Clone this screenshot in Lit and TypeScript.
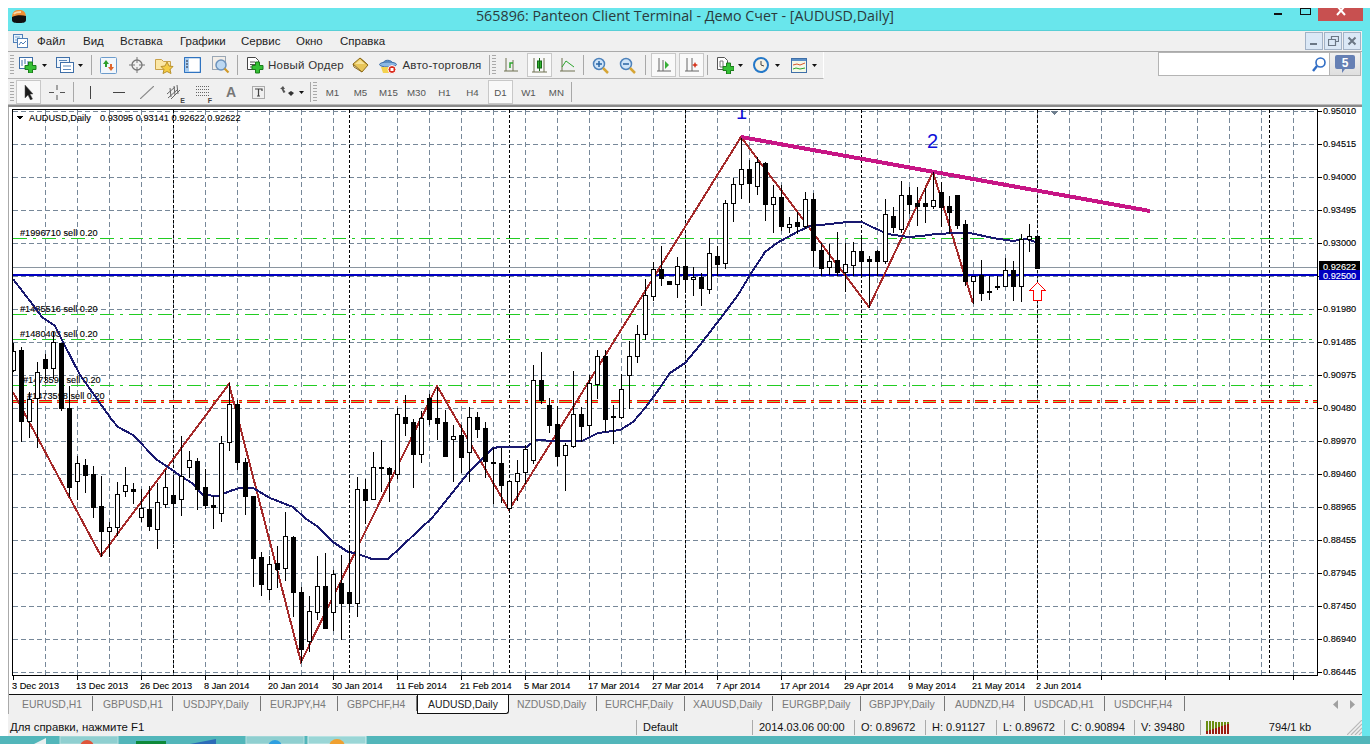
import { LitElement, html, css, svg, TemplateResult } from "lit";
import { customElement } from "lit/decorators.js";

// candle data in pixel rows: [high, bodyTop, bodyBottom, low, isWhite]
const C: [number, number, number, number, number][] = [
[343,351,370,371,1],[347,350,421,441,0],[392,399,421,437,1],[362,372,398,447,1],[354,359,368,380,0],[332,342,368,378,1],[345,343,408,410,0],[386,408,487,496,0],
[456,463,481,499,1],[459,465,475,492,0],[466,474,507,517,0],[476,506,531,556,0],[522,527,531,556,1],[482,494,527,535,1],[467,485,491,496,1],[483,489,491,503,0],
[489,508,517,521,1],[486,509,526,530,0],[483,502,529,548,1],[470,487,504,507,1],[475,495,503,543,0],[436,476,499,515,1],[451,460,467,477,1],[458,461,489,509,0],
[469,487,505,508,0],[496,505,507,528,0],[436,443,513,521,1],[383,404,442,450,1],[400,404,462,469,0],[458,462,496,514,0],[496,496,558,586,0],[552,557,584,595,0],
[556,564,589,599,1],[546,563,569,587,0],[512,536,568,580,1],[536,537,592,616,0],[587,592,649,662,0],[596,611,641,651,1],[556,586,612,619,1],[553,586,628,628,0],
[570,574,612,630,1],[555,583,603,639,0],[547,592,603,611,0],[477,489,603,616,1],[479,489,500,523,0],[452,467,499,492,1],[440,467,468,491,0],[467,468,474,501,0],
[408,414,474,478,1],[395,417,423,435,0],[419,422,454,487,0],[411,418,454,462,1],[394,398,419,424,0],[387,418,423,439,0],[410,422,456,456,0],[425,436,439,481,1],
[425,435,457,472,0],[407,417,452,481,1],[412,417,429,437,0],[422,428,461,477,0],[448,462,463,503,0],[448,463,485,502,0],[480,481,508,511,1],[460,473,481,500,1],
[445,449,472,483,1],[365,380,460,463,1],[352,380,400,403,0],[398,405,425,432,0],[406,424,456,465,0],[443,445,455,490,1],[371,414,446,447,1],[407,414,426,441,0],
[375,383,425,435,1],[350,356,384,398,1],[350,356,419,431,0],[405,416,417,443,0],[374,389,417,418,1],[341,356,375,408,1],[325,334,356,362,1],[279,295,334,339,1],
[262,269,296,300,1],[246,269,278,285,0],[281,281,284,284,0],[257,266,284,297,1],[242,266,279,292,0],[267,277,279,295,1],[273,277,288,305,0],[238,253,289,293,1],
[246,256,264,275,0],[200,203,263,268,1],[178,184,203,221,1],[138,169,184,198,1],[160,169,183,202,0],[157,162,186,194,1],[162,163,204,220,0],[185,197,204,232,1],
[185,197,226,230,0],[217,224,227,232,1],[212,222,226,233,0],[192,199,226,228,1],[193,199,250,266,0],[243,250,268,275,0],[244,261,267,274,1],[232,260,272,275,0],
[243,264,272,291,1],[242,251,265,275,1],[236,251,261,275,0],[256,259,261,307,0],[250,251,261,275,0],[199,214,261,263,1],[207,216,227,232,0],[181,195,229,232,1],
[187,195,204,213,0],[187,203,206,225,0],[188,203,206,222,0],[172,200,206,208,1],[182,192,207,226,0],[196,206,212,233,0],[195,195,225,228,0],[220,224,281,285,0],
[276,276,281,303,1],[260,275,293,300,0],[276,291,292,299,0],[276,286,287,289,0],[258,270,286,286,1],[261,270,286,300,0],[234,239,286,301,1],[224,236,239,251,1],[236,236,268,268,0],
];
const PRICES = ["0.95010","0.94515","0.94000","0.93495","0.93000","","0.91980","0.91485","0.90975","0.90480","0.89970","0.89460","0.88965","0.88455","0.87945","0.87450","0.86940","0.86445"];
const HY = [111,144,177,210,243,276,309,342,375,408,441,474,507,540,573,606,639,672];
const DATES = ["3 Dec 2013","13 Dec 2013","26 Dec 2013","8 Jan 2014","20 Jan 2014","30 Jan 2014","11 Feb 2014","21 Feb 2014","5 Mar 2014","17 Mar 2014","27 Mar 2014","7 Apr 2014","17 Apr 2014","29 Apr 2014","9 May 2014","21 May 2014","2 Jun 2014"];
const SEP = [173,349,509,685,861,1037,1269];
const ZIG = "13,392 101,556 229,384 301,662 437,386 509,510 741,137 869,307 933,172 973,303";
const MA = "13,279 33,305 42,317 55,326 63,342 80,375 112,420 118,427 133,435 157,460 168,467 182,477 192,483 203,495 218,496 230,491 240,488 253,488 270,498 293,507 305,518 318,527 333,542 348,552 355,553 372,559 388,559 400,548 420,529 432,518 457,487 468,473 493,448 500,447 527,447 535,440 557,441 582,441 598,433 620,430 633,422 645,408 657,392 670,373 685,363 700,345 720,319 738,295 750,275 765,252 777,243 797,232 810,226 830,224 847,222 862,222 872,227 888,234 908,237 922,236 935,234 958,233 970,233 993,238 1013,241 1027,239 1035,242";
const ORDERS: [number, number, string][] = [[20,236,"#1996710 sell 0.20"],[20,312,"#1485516 sell 0.20"],[20,337,"#1480403 sell 0.20"],[23,383,"#1473598 sell 0.20"],[27,399,"#1473598 sell 0.20"]];
const TABS: [string, number, number][] = [["EURUSD,H1",22,84],["GBPUSD,H1",103,80],["USDJPY,Daily",183,88],["EURJPY,H4",270,77],["GBPCHF,H4",347,79],["AUDUSD,Daily",428,92],["NZDUSD,Daily",517,88],["EURCHF,Daily",605,88],["XAUUSD,Daily",693,88],["EURGBP,Daily",782,88],["GBPJPY,Daily",869,84],["AUDNZD,H4",955,80],["USDCAD,H1",1034,80],["USDCHF,H4",1114,80]];
const STATUS: [string, number][] = [["Default",116],["2014.03.06 00:00",102],["O: 0.89672",71],["H: 0.91127",71],["L: 0.89672",68],["C: 0.90894",70],["V: 39480",66]];

const ic = (w: number, h: number, body: TemplateResult) => html`<svg width=${w} height=${h} viewBox="0 0 ${w} ${h}">${body}</svg>`;
const plus = (x: number, y: number) => svg`<path d="M${x+3.5} ${y}h4v3.5h3.5v4h-3.5v3.5h-4v-3.5h-3.5v-4h3.5z" fill="#35c035" stroke="#1b7d1b" stroke-width="1"/>`;
const drop = html`<svg width="5" height="3" viewBox="0 0 5 3"><path d="M0 0h5L2.5 3z" fill="#111"/></svg>`;

const I: Record<string, TemplateResult> = {
  app: ic(16,15,svg`<path d="M1 9C1 2 4 1 8 1s7 1 7 8z" fill="#ef8f35"/><path d="M3 5c1-2 4-2 7-2" stroke="#f8d9a8" stroke-width="2" fill="none"/><path d="M1 8c4-2 10-2 14-1v4c0 3-4 3-7 3s-7 0-7-3z" fill="#111"/>`),
  menu: ic(15,14,svg`<rect x=".5" y=".5" width="9" height="8" fill="#eaf3fb" stroke="#4f7fb8"/><rect x="4.5" y="4.5" width="10" height="9" fill="#fff" stroke="#4f7fb8"/><path d="M6 11l2-3 2 2 3-3" stroke="#4f7fb8" fill="none"/><path d="M2 3h5M2 6h2" stroke="#7aa5d2"/>`),
  chart: ic(18,16,svg`<rect x=".5" y=".5" width="13" height="11" fill="#fff" stroke="#3f6fa8"/><path d="M3 3v6M6 2v5M9 4v5" stroke="#3f6fa8"/>${plus(6,5)}`),
  profile: ic(18,16,svg`<rect x=".5" y=".5" width="13" height="10" fill="#eef5fc" stroke="#3f6fa8"/><rect x="4.5" y="5.5" width="13" height="10" fill="#fff" stroke="#3f6fa8"/><path d="M3 3.5h8M7 9h8M7 12.500h8" stroke="#5b88bb"/>`),
  market: ic(17,17,svg`<rect x=".5" y=".5" width="16" height="16" rx="1" fill="#f2f7fc" stroke="#6d9ccc"/><path d="M6 3l3 4H7v3H5V7H3z" fill="#2ca02c"/><path d="M11 14l-3-4h2V7h2v3h2z" fill="#e0652a"/>`),
  cross: ic(16,16,svg`<circle cx="8" cy="8" r="5" fill="none" stroke="#777" stroke-width="1.3"/><path d="M8 0v6M8 10v6M0 8h6M10 8h6" stroke="#777"/>`),
  star: ic(19,18,svg`<path d="M.5 3.500h6l2 2h7v8H.5z" fill="#fbe7a6" stroke="#c9a24a"/><path d="M12 6l2 4 4 .5-3 3 1 4-4-2-4 2 1-4-3-3 4-.5z" fill="#f4cc44" stroke="#b8912c"/>`),
  nav: ic(17,16,svg`<rect x=".5" y=".5" width="16" height="15" rx="1" fill="#fff" stroke="#2f73c0" stroke-width="1.500"/><rect x="1" y="1" width="4" height="14" fill="#a9cdf0"/><path d="M2 4h2M2 7h2M2 10h2" stroke="#223"/>`),
  tester: ic(18,18,svg`<rect x=".5" y=".5" width="13" height="13" fill="#f3eee8" stroke="#9aa7b5"/><circle cx="9" cy="9" r="5" fill="#bcd8f2" stroke="#6d93bc" stroke-width="1.500"/><path d="M12.500 12.500l4 4" stroke="#d09a2a" stroke-width="2.200"/>`),
  order: ic(17,17,svg`<path d="M.5.5h8l3 3v9H.5z" fill="#fff" stroke="#444"/><path d="M3 5h5M3 7.500h5M3 10h3" stroke="#555"/>${plus(5,5)}`),
  book: ic(17,16,svg`<path d="M1 7l7-6 8 7-6 7z" fill="#e8c65a" stroke="#8d6b1a"/><path d="M1 7l1 3 8 5M8 1l8 7" stroke="#8d6b1a" fill="none"/><path d="M3 7l5-4 5 4" fill="#f6e39a"/>`),
  hat: ic(18,17,svg`<path d="M4 7C4 2 13 2 14 7z" fill="#6fa3d8" stroke="#3f6fa8"/><ellipse cx="9" cy="7.500" rx="8.500" ry="2.500" fill="#8cb8e4" stroke="#3f6fa8"/><path d="M2 10h12v6H4z" fill="#f3d24f"/><circle cx="13" cy="12.500" r="4" fill="#d92b1c" stroke="#fff"/><rect x="11.500" y="11" width="3" height="3" fill="#fff"/>`),
  bars: ic(14,14,svg`<path d="M2 0v13M0 13h14M9 2v11" stroke="#6f7150" fill="none"/><path d="M6 10V5h3" stroke="#2da52d" stroke-width="1.500" fill="none"/>`),
  candle: ic(15,15,svg`<path d="M2 0v14M0 14h15M12 0v14" stroke="#6f7150" fill="none"/><rect x="5.500" y="3" width="4" height="7" fill="#2fb52f" stroke="#146814"/><path d="M7.500 0v13" stroke="#146814"/>`),
  line: ic(15,14,svg`<path d="M2 0v13M0 13h15" stroke="#6f7150" fill="none"/><path d="M2 9l4-6 4 3 4 3" stroke="#2da52d" fill="none"/>`),
  zin: ic(17,17,svg`<circle cx="7" cy="7" r="5.500" fill="#cfe4f8" stroke="#4d82bb" stroke-width="1.500"/><path d="M4 7h6M7 4v6" stroke="#2a65a5" stroke-width="1.500"/><path d="M11 11l5 5" stroke="#d6a535" stroke-width="2.500"/>`),
  zout: ic(17,17,svg`<circle cx="7" cy="7" r="5.500" fill="#cfe4f8" stroke="#4d82bb" stroke-width="1.500"/><path d="M4 7h6" stroke="#2a65a5" stroke-width="1.500"/><path d="M11 11l5 5" stroke="#d6a535" stroke-width="2.500"/>`),
  scroll: ic(14,14,svg`<path d="M2 0v13M0 13h14M6 2v11" stroke="#666" fill="none"/><path d="M8 3l4 4-4 4z" fill="#38b038"/>`),
  shift: ic(14,14,svg`<path d="M2 0v13M0 13h14M7 0v13" stroke="#666" fill="none"/><path d="M10 4l1 2 2 1-2 1-1 2-1-2-2-1 2-1z" fill="#d6361e"/>`),
  indic: ic(17,17,svg`<path d="M.5.5h7l3 3v9H.5z" fill="#fff" stroke="#555"/><path d="M3 4h3v6H3z" fill="none" stroke="#777"/>${plus(6,6)}`),
  clock: ic(16,16,svg`<circle cx="8" cy="8" r="7" fill="#f7f1e2" stroke="#2478c8" stroke-width="2"/><path d="M8 4v4l3 1" stroke="#444" fill="none"/>`),
  tpl: ic(16,15,svg`<rect x=".5" y=".5" width="15" height="14" fill="#f4f8e8" stroke="#3f6fa8"/><rect x="1" y="1" width="14" height="2" fill="#5b8fc8"/><path d="M2 7l4-1 3 1 5-2" stroke="#d8562b" fill="none"/><path d="M2 11l3-1 4 1 5-1" stroke="#2da52d" fill="none"/>`),
  cursor: ic(10,15,svg`<path d="M1 0l8 9H6l2.500 5-2 1L4 10l-3 3z" fill="#1b1b1b" stroke="#555" stroke-width=".5"/>`),
  thin: ic(16,15,svg`<path d="M8 0v5M8 10v5M0 7.500h5M11 7.500h5" stroke="#555"/>`),
  vline: ic(3,13,svg`<path d="M1.500 0v13" stroke="#444"/>`),
  hline: ic(12,3,svg`<path d="M0 1.500h12" stroke="#444"/>`),
  trend: ic(14,13,svg`<path d="M0 13L14 0" stroke="#888" stroke-width="1.200"/>`),
  channel: ic(16,17,svg`<path d="M0 10L8 3M1 14l9-8M4 15l9-9M3 4l1 9M7 2l1 9M10 1l1 9" stroke="#666" fill="none"/>`),
  fibo: ic(14,12,svg`<path d="M0 .5h14M0 3.500h14M0 6.500h14M0 9.500h14" stroke="#666" stroke-dasharray="1 1"/>`),
  tbox: ic(13,13,svg`<rect x=".5" y=".5" width="12" height="12" fill="none" stroke="#666" stroke-dasharray="1 1"/><path d="M3 3h7v2M6.500 3v7M5 10h3" stroke="#444" stroke-width="1.200" fill="none"/>`),
  arrows: ic(15,13,svg`<path d="M0 3l3-3 2 3H3.500l2 3-2 1-2-4z" fill="#555"/><path d="M8 7l3 3 3-3-3-2z" fill="#333"/>`),
  glass: ic(14,15,svg`<circle cx="8.500" cy="5.500" r="4.500" fill="#fff" stroke="#2f6cc4" stroke-width="1.600"/><path d="M5 9l-4 5" stroke="#2f6cc4" stroke-width="2.400"/>`),
  bubble: ic(20,19,svg`<path d="M2 0h16a2 2 0 0 1 2 2v10a2 2 0 0 1-2 2H10l-3 4v-4H2a2 2 0 0 1-2-2V2a2 2 0 0 1 2-2z" fill="#6680b4"/>`),
};

type Tool = { x: number; w: number; icon?: string; text?: string; on?: boolean; kind?: string };
const ROW1: Tool[] = [
  {x:10,w:4,kind:"grip"},{x:19,w:18,icon:"chart"},{x:42,w:5,kind:"drop"},{x:56,w:18,icon:"profile"},{x:78,w:5,kind:"drop"},{x:91,w:1,kind:"sep"},
  {x:100,w:17,icon:"market"},{x:129,w:16,icon:"cross"},{x:155,w:19,icon:"star"},{x:184,w:17,icon:"nav"},{x:212,w:18,icon:"tester"},{x:237,w:1,kind:"sep"},
  {x:247,w:17,icon:"order"},{x:268,w:76,text:"Новый Ордер"},{x:352,w:17,icon:"book"},{x:379,w:18,icon:"hat"},{x:402,w:80,text:"Авто-торговля"},
  {x:489,w:1,kind:"sep"},{x:492,w:4,kind:"grip"},{x:504,w:14,icon:"bars"},{x:527,w:25,icon:"candle",on:true},{x:560,w:15,icon:"line"},{x:583,w:1,kind:"sep"},
  {x:592,w:17,icon:"zin"},{x:619,w:17,icon:"zout"},{x:645,w:1,kind:"sep"},{x:651,w:25,icon:"scroll",on:true},{x:679,w:25,icon:"shift",on:true},{x:707,w:1,kind:"sep"},
  {x:717,w:17,icon:"indic"},{x:738,w:5,kind:"drop"},{x:753,w:16,icon:"clock"},{x:775,w:5,kind:"drop"},{x:791,w:16,icon:"tpl"},{x:812,w:5,kind:"drop"},
];
const ROW2: Tool[] = [
  {x:10,w:4,kind:"grip"},{x:16,w:25,icon:"cursor",on:true},{x:49,w:16,icon:"thin"},{x:73,w:1,kind:"sep"},{x:89,w:3,icon:"vline"},{x:113,w:12,icon:"hline"},
  {x:140,w:14,icon:"trend"},{x:167,w:16,icon:"channel",kind:"E"},{x:196,w:14,icon:"fibo",kind:"F"},{x:226,w:10,text:"A",kind:"gl"},{x:252,w:13,icon:"tbox"},
  {x:280,w:15,icon:"arrows"},{x:299,w:5,kind:"drop"},{x:310,w:1,kind:"sep"},{x:313,w:4,kind:"grip"},
  {x:320,w:25,text:"M1",kind:"tf"},{x:348,w:25,text:"M5",kind:"tf"},{x:376,w:25,text:"M15",kind:"tf"},{x:404,w:25,text:"M30",kind:"tf"},{x:432,w:25,text:"H1",kind:"tf"},{x:460,w:25,text:"H4",kind:"tf"},
  {x:488,w:25,text:"D1",kind:"tf",on:true},{x:516,w:25,text:"W1",kind:"tf"},{x:544,w:25,text:"MN",kind:"tf"},{x:571,w:1,kind:"sep"},
];

@customElement("app-root")
export class AppRoot extends LitElement {
  static styles = css`
    :host { display: block; width: 1370px; height: 744px; background: #fff; overflow: hidden; font-family: "Liberation Sans", Arial, sans-serif; color: #222; }
    .page { height: 744px; display: flex; flex-direction: column; }
    .win { flex: 1; min-height: 0; margin: 8px 0 0 8px; border-right: 8px solid #69e6ec; display: flex; flex-direction: column; background: #f0f0f0; }
    .title { height: 22px; flex: none; background: #69e6ec; border-bottom: 1px solid #58cfd6; display: grid; grid-template-columns: 1fr auto 1fr; align-items: start; }
    .title .t { font: 14.3px "Open Sans", "Liberation Sans", sans-serif; color: #2b3a3c; white-space: nowrap; line-height: 16px; }
    .appicon { display: flex; padding: 1px 0 0 3px; height: 21px; }
    .caps { justify-self: end; display: flex; align-items: flex-start; height: 12px; margin-right: -1px; }
    .min { width: 8px; height: 2px; background: #111; margin: 5px 18px 0 0; }
    .max { width: 9px; height: 5px; border: 1px solid #111; margin: 0 7px 0 0; }
    .close { width: 45px; height: 13px; background: #c85050; color: #fff; display: flex; justify-content: center; overflow: hidden; }
    .close svg { margin-top: -2px; }
    .menu { height: 20px; flex: none; border-bottom: 1px solid #aaa; display: flex; align-items: center; font-size: 11.5px; color: #222; }
    .menu .mi { flex: none; white-space: nowrap; width: 0; }
    .menu .micon { display: flex; flex: none; margin-left: 5px; }
    .mdi { margin-left: auto; display: flex; gap: 1px; margin-right: 1px; }
    .mdi div { width: 16px; height: 16px; border: 1px solid #a2b2c6; background: #dbe8f6; display: flex; align-items: center; justify-content: center; }
    .row { display: flex; align-items: center; flex: none; }
    .row1 { height: 27px; }
    .row1 .tools { height: 26px; display: flex; align-items: center; border-bottom: 1px solid #b4b4b4; width: 815px; flex: none; border-right: 1px solid #fff; }
    .row2 { height: 26px; border-bottom: 2px solid #8a8a8a; box-shadow: inset 0 -1px 0 #bbb; }
    .t-item { flex: none; display: flex; align-items: center; justify-content: center; position: relative; height: 24px; white-space: nowrap; }
    .t-item.on { background: #f9f9f9; outline: 1px solid #c8c8c8; outline-offset: -1px; }
    .t-text { font-size: 11.5px; letter-spacing: .25px; color: #333; }
    .tf { font-size: 9.7px; color: #555; letter-spacing: .1px; }
    .gl { font: bold 14px "Liberation Sans", sans-serif; color: #777; }
    .sep { width: 1px; height: 20px; background: #a8a8a8; }
    .grip { width: 4px; height: 20px; background: repeating-linear-gradient(#a9a9a9 0 1px, transparent 1px 3px); }
    .tag { position: absolute; font: bold 7px "Liberation Sans", sans-serif; color: #444; right: -2px; bottom: 0; }
    .search { margin-left: auto; display: flex; margin-right: 1px; height: 24px; flex: none; margin-top: -3px; }
    .sbox { width: 172px; border: 1px solid #b4b4b4; background: #fff; display: flex; align-items: center; justify-content: flex-end; padding-right: 3px; box-sizing: border-box; }
    .sbtn { width: 31px; border: 1px solid #b4b4b4; border-left: none; background: linear-gradient(#f1f1f1, #dfdfdf); display: flex; align-items: center; justify-content: center; position: relative; box-sizing: border-box; }
    .sbtn span { position: absolute; top: 3px; left: 0; right: 0; text-align: center; color: #fff; font: bold 12px "Liberation Sans", sans-serif; }
    .chartbox { flex: none; height: 588px; background: #fff; border-bottom: 1px solid #111; border-left: 1px solid #aaa; box-sizing: border-box; }
    .chartbox svg { display: block; }
    .ct { font: 9.2px "Liberation Sans", sans-serif; fill: #000; stroke: #000; stroke-width: .12px; shape-rendering: auto; }
    .ctw { fill: #fff; stroke: #fff; }
    .tabs { height: 20px; flex: none; display: flex; align-items: stretch; font-size: 10.4px; color: #7a7a7a; border-left: 1px solid #aaa; margin-top: -1px; }
    .tab { flex: none; box-sizing: border-box; border-right: 1px solid #777; margin: 2px 0 3px; display: flex; align-items: center; white-space: nowrap; padding-top: 1px; }
    .tab.active { background: #fff; color: #222; border: 1px solid #111; border-top: none; margin: 1px 0 0; height: 19px; border-radius: 0 0 3px 0; }
    .scrollers { margin-left: auto; display: flex; gap: 12px; align-items: center; margin-right: 7px; }
    .status { height: 21px; flex: none; display: flex; align-items: center; font-size: 11px; color: #111; padding-top: 5px; box-sizing: border-box; }
    .st { flex: none; box-sizing: border-box; height: 15px; border-left: 1px solid #aaa; padding-left: 6px; display: flex; align-items: center; white-space: nowrap; }
    .help { flex: none; width: 628px; padding-left: 2px; box-sizing: border-box; white-space: nowrap; font-size: 11.4px; }
    .conn { width: 66px; height: 15px; }
    .kb { flex: 1; white-space: nowrap; text-align: right; margin-right: 36px; }
    .grip2 { flex: none; display: flex; align-self: flex-end; }
    .taskbar { height: 8px; flex: none; background: #52b6ba; }
    .taskbar svg { display: block; }
  `;

  private tools(list: Tool[]) {
    let pos = 8;
    return list.map((t) => {
      const ml = t.x - pos;
      pos = t.x + t.w;
      const s = `margin-left:${ml}px;width:${t.w}px`;
      if (t.kind === "sep") return html`<div class="sep" style=${s}></div>`;
      if (t.kind === "grip") return html`<div class="grip" style=${s}></div>`;
      if (t.kind === "drop") return html`<div class="t-item" style=${s}>${drop}</div>`;
      return html`<div class="t-item ${t.on ? "on" : ""}" style=${s}>
        ${t.icon ? I[t.icon] : ""}
        ${t.text ? html`<span class=${t.kind === "tf" ? "tf" : t.kind === "gl" ? "gl" : "t-text"}>${t.text}</span>` : ""}
        ${t.kind === "E" || t.kind === "F" ? html`<span class="tag">${t.kind}</span>` : ""}
      </div>`;
    });
  }

  private chart() {
    const vx: number[] = [];
    for (let x = 45; x <= 1293; x += 32) vx.push(x);
    const ticks: number[] = [];
    for (let x = 13; x <= 1317; x += 64) ticks.push(x);
    return html`<svg width="1353" height="587" viewBox="9 107 1353 587" shape-rendering="crispEdges">
      <defs><clipPath id="plot"><rect x="13" y="110" width="1304" height="565"></rect></clipPath></defs>
      <g clip-path="url(#plot)">
        ${HY.map((y) => svg`<line x1="13" x2="1317" y1=${y + 0.5} y2=${y + 0.5} stroke="#778899" stroke-dasharray="5 3"/>`)}
        ${vx.map((x) => svg`<line x1=${x + 0.5} x2=${x + 0.5} y1="110" y2="675" stroke="#778899" stroke-dasharray="5 3"/>`)}
        ${SEP.map((x) => svg`<line x1=${x + 0.5} x2=${x + 0.5} y1="110" y2="675" stroke="#000" stroke-dasharray="3 2"/>`)}
        ${[238.5, 314.5, 339.5, 385.5].map((y) => svg`<line x1="13" x2="1317" y1=${y} y2=${y} stroke="#22cc22" stroke-dasharray="14 6 3 6"/>`)}
        <line x1="13" x2="1317" y1="401.500" y2="401.500" stroke="#ff0000" stroke-width="3" stroke-dasharray="13 5 3 5"/>
        <line x1="13" x2="1317" y1="401.500" y2="401.500" stroke="#9ad24a" stroke-width="1" stroke-dasharray="13 5 3 5"/>
        <line x1="13" x2="1317" y1="267.500" y2="267.500" stroke="#8a95a0"/>
        <line x1="13" x2="1317" y1="275" y2="275" stroke="#0000c0" stroke-width="2"/>
        ${ORDERS.map(([x, y, t]) => svg`<text x=${x} y=${y} class="ct">${t}</text>`)}
        <polyline points=${ZIG} fill="none" stroke="#a52a2a" stroke-width="2"/>
        <polyline points=${MA} fill="none" stroke="#191970" stroke-width="2"/>
        <line x1="741" y1="137" x2="1150" y2="211" stroke="#c71585" stroke-width="4"/>
        <text x="736" y="119" fill="#1010d8" style="font:20px 'Liberation Sans',sans-serif">1</text>
        <text x="927" y="148" fill="#1010d8" style="font:20px 'Liberation Sans',sans-serif">2</text>
        ${C.map(([h, t, b, l, w], i) => {
          const x = 13 + 8 * i;
          return svg`<line x1=${x + 0.5} x2=${x + 0.5} y1=${h} y2=${l + 1} stroke="#000"/>
            <rect x=${x - 1.5} y=${t + 0.5} width="4" height=${Math.max(b - t, 1)} fill=${w ? "#fff" : "#000"} stroke="#000"/>`;
        })}
        <path d="M1054 115l-4-4h8z" fill="#6e7e8e"/>
        <path d="M1037.500 282.500l8 8h-4v10h-8v-10h-4z" fill="#fff" stroke="#ff0000"/>
      </g>
      <path d="M12.500 109v566.500H1317.500V109.500H12" fill="none" stroke="#000"/>
      ${HY.map((y) => svg`<line x1="1318" x2="1322" y1=${y + 0.5} y2=${y + 0.5} stroke="#000"/>`)}
      ${ticks.map((x) => svg`<line x1=${x + 0.5} x2=${x + 0.5} y1="676" y2="680" stroke="#000"/>`)}
      ${PRICES.map((p, i) => svg`<text x="1323" y=${HY[i] + 3} class="ct">${p}</text>`)}
      ${DATES.map((d, i) => svg`<text x=${12 + 64 * i} y="688.500" class="ct">${d}</text>`)}
      <path d="M17 116h6l-3 3.500z" fill="#000"/>
      <text x="29" y="121" class="ct">AUDUSD,Daily</text>
      <text x="100" y="121" class="ct">0.93095 0.93141 0.92622 0.92622</text>
      <rect x="1319" y="261" width="41" height="9" fill="#000"/>
      <text x="1323" y="270" class="ct ctw">0.92622</text>
      <rect x="1319" y="270" width="41" height="10" fill="#0000c0"/>
      <text x="1323" y="278.500" class="ct ctw">0.92500</text>
    </svg>`;
  }

  render() {
    const menu: [string, number][] = [["Файл",37],["Вид",83],["Вставка",120],["Графики",180],["Сервис",241],["Окно",296],["Справка",340]];
    let mp = 28;
    const bars = Array.from({ length: 8 }, (_, i) => i);
    let tabStart = 9;
    return html`<div class="page">
      <div class="win">
        <div class="title">
          <div class="appicon">${I.app}</div>
          <div class="t">565896: Panteon Client Terminal - Демо Счет - [AUDUSD,Daily]</div>
          <div class="caps"><div class="min"></div><div class="max"></div>
            <div class="close"><svg width="12" height="12" viewBox="0 0 12 12"><path d="M2 0l8 9M10 0L2 9" stroke="#fff" stroke-width="2"/></svg></div>
          </div>
        </div>
        <div class="menu">
          <span class="micon">${I.menu}</span>
          ${menu.map(([t, x]) => { const ml = x - mp; mp = x; return html`<span class="mi" style="margin-left:${ml}px">${t}</span>`; })}
          <div class="mdi">
            <div><svg width="10" height="10" viewBox="0 0 10 10"><path d="M1 7h7v2H1z" fill="#6b7785"/></svg></div>
            <div><svg width="11" height="11" viewBox="0 0 11 11"><path d="M3.500 3V.5h7v5H8M.5 3.500h7v6h-7z" fill="none" stroke="#6b7785" stroke-width="1.200"/></svg></div>
            <div><svg width="10" height="10" viewBox="0 0 10 10"><path d="M1.500 1.500l7 7M8.500 1.500l-7 7" stroke="#6b7785" stroke-width="2"/></svg></div>
          </div>
        </div>
        <div class="row row1">
          <div class="tools">${this.tools(ROW1)}</div>
          <div class="search">
            <div class="sbox">${I.glass}</div>
            <div class="sbtn">${I.bubble}<span>5</span></div>
          </div>
        </div>
        <div class="row row2">${this.tools(ROW2)}</div>
        <div class="chartbox">${this.chart()}</div>
        <div class="tabs">
          ${TABS.map(([t, x, w]) => {
            const active = t === "AUDUSD,Daily";
            const pad = x - tabStart - (active ? 1 : 0);
            tabStart += w;
            return html`<div class="tab ${active ? "active" : ""}" style="width:${w}px;padding-left:${pad}px">${t}</div>`;
          })}
          <div class="scrollers">
            <svg width="5" height="9" viewBox="0 0 5 9"><path d="M5 0v9L0 4.500z" fill="#a0a0a0"/></svg>
            <svg width="5" height="9" viewBox="0 0 5 9"><path d="M0 0v9l5-4.500z" fill="#a0a0a0"/></svg>
          </div>
        </div>
        <div class="status">
          <div class="help">Для справки, нажмите F1</div>
          ${STATUS.map(([t, w]) => html`<div class="st" style="width:${w}px">${t}</div>`)}
          <div class="st conn">
            <svg width="24" height="13" viewBox="0 0 24 13" shape-rendering="crispEdges" style="margin-left:-1px">
              ${bars.map((i) => svg`<rect x=${i * 3} y=${i * 0.2} width="2" height=${11 - i} fill="#6b8e12"/><rect x=${i * 3} y=${10 - i} width="2" height=${3 + i} fill="#9b1d10"/>`)}
            </svg>
          </div>
          <div class="kb">794/1 kb</div>
          <div class="grip2"><svg width="15" height="15" viewBox="0 0 15 15"><path d="M0 15L15 0M4 15L15 4M8 15l7-7M12 15l3-3" stroke="#b8b8b8" stroke-width="1.200"/></svg></div>
        </div>
      </div>
      <div class="taskbar">
        <svg width="1370" height="8" viewBox="0 0 1370 8">
          <rect x="60" y="0" width="58" height="8" fill="#8fcfd0" stroke="#b8e0e0"/>
          <rect x="246" y="0" width="58" height="8" fill="#8fcfd0" stroke="#b8e0e0"/>
          <rect x="308" y="0" width="58" height="8" fill="#9ad6d6" stroke="#d4eeee"/>
          <path d="M34 8l12-6v6z" fill="#e8f0f0"/>
          <circle cx="87" cy="11" r="7" fill="#e0553a"/>
          <rect x="136" y="5" width="30" height="3" fill="#0e8a3a"/>
          <path d="M190 8l26-5v5z" fill="#2d6cb8"/>
          <circle cx="275" cy="11" r="7" fill="#2f9fe0"/>
          <circle cx="337" cy="11" r="8" fill="#f0a030"/>
        </svg>
      </div>
    </div>`;
  }
}
